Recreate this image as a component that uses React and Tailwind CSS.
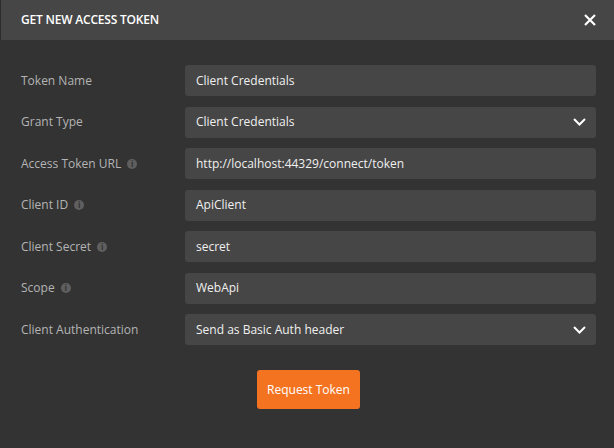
import React from 'react';

const fields = [
  { label: 'Token Name', value: 'Client Credentials' },
  { label: 'Grant Type', value: 'Client Credentials', select: true },
  { label: 'Access Token URL', value: 'http://localhost:44329/connect/token', info: true },
  { label: 'Client ID', value: 'ApiClient', info: true },
  { label: 'Client Secret', value: 'secret', info: true },
  { label: 'Scope', value: 'WebApi', info: true },
  { label: 'Client Authentication', value: 'Send as Basic Auth header', select: true },
];

const InfoIcon = () => (
  <span className="ml-[6px] inline-flex h-[10px] w-[10px] items-center justify-center rounded-full bg-[#5f5f5f] text-[8px] font-bold leading-none text-[#333333]">
    i
  </span>
);

const Chevron = () => (
  <svg width="13" height="8" viewBox="0 0 13 8" fill="none">
    <path d="M1 1l5.5 5.5L12 1" stroke="#ffffff" strokeWidth="2" />
  </svg>
);

export default function App() {
  return (
    <div
      className="flex h-[448px] w-[614px] flex-col bg-[#333333]"
      style={{ fontFamily: '"Open Sans", "Noto Sans", sans-serif' }}
    >
      {/* header */}
      <div className="flex h-[40px] items-center justify-between border-l border-[#2c2c2c] bg-[#464646] pl-[20px] pr-[18px]">
        <span className="text-[12px] font-semibold tracking-[-0.2px] text-white">GET NEW ACCESS TOKEN</span>
        <svg width="12" height="12" viewBox="0 0 12 12">
          <path d="M1 1l10 10M11 1L1 11" stroke="#ffffff" strokeWidth="2.2" />
        </svg>
      </div>

      {/* form */}
      <div className="flex flex-col gap-[10.5px] pl-[21px] pr-[18px] pt-[25px]">
        {fields.map((f) => (
          <div key={f.label} className="flex items-center">
            <div className="flex w-[164px] items-center text-[12px] text-[#b4b4b4]">
              {f.label}
              {f.info && <InfoIcon />}
            </div>
            <div className="flex h-[31px] flex-1 items-center justify-between rounded-[3px] bg-[#464646] pl-[11px] pr-[10px] text-[12px] text-[#f0f0f0]">
              <span>{f.value}</span>
              {f.select && <Chevron />}
            </div>
          </div>
        ))}
      </div>

      <div className="flex pl-[257px] pt-[25px]">
        <button className="h-[39px] w-[103px] rounded-[3px] bg-[#f47321] text-[12px] text-white">
          Request Token
        </button>
      </div>
    </div>
  );
}
